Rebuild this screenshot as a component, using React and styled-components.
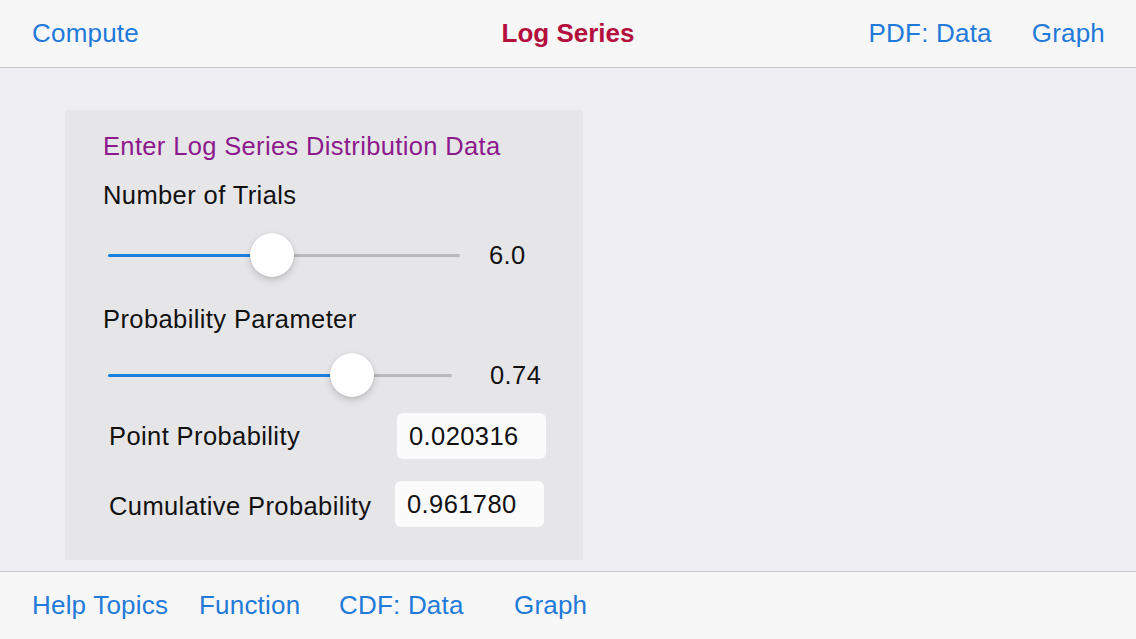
import React from 'react'
import styled, { createGlobalStyle } from 'styled-components'

const GlobalStyle = createGlobalStyle`
  html, body {
    margin: 0;
    padding: 0;
    background: #efeff3;
  }
  body {
    font-family: 'Liberation Sans', Arial, sans-serif;
    -webkit-font-smoothing: antialiased;
  }
`

const Screen = styled.div`
  width: 1136px;
  height: 639px;
  display: flex;
  flex-direction: column;
  background: #efeff3;
  overflow: hidden;
`

const Bar = styled.div`
  height: 68px;
  flex: none;
  display: flex;
  align-items: center;
  background: #f7f7f8;
  box-sizing: border-box;
  padding: 0 31px 0 32px;
  border-bottom: ${p => (p.top ? '1px solid #c9c9cc' : 'none')};
  border-top: ${p => (p.top ? 'none' : '1px solid #c9c9cc')};
  position: relative;
`

const NavButton = styled.span`
  font-size: 26px;
  color: #1f7ad8;
  letter-spacing: 0.2px;
  width: ${p => (p.w ? `${p.w}px` : 'auto')};
  margin-left: ${p => (p.ml ? `${p.ml}px` : '0')};
  white-space: nowrap;
`

const Title = styled.span`
  position: absolute;
  left: 0;
  right: 0;
  text-align: center;
  font-size: 26px;
  font-weight: bold;
  color: #b3103e;
  pointer-events: none;
`

const Spacer = styled.div`
  flex: 1;
`

const Body = styled.div`
  flex: 1;
  padding: 42px 0 0 65px;
  box-sizing: border-box;
`

const Panel = styled.div`
  width: 518px;
  height: 450px;
  background: #e6e6e8;
  box-sizing: border-box;
  padding: 14px 0 0 38px;
  display: flex;
  flex-direction: column;
`

const Heading = styled.div`
  height: 44px;
  line-height: 44px;
  font-size: 25.5px;
  letter-spacing: 0.35px;
  color: #8c1a8c;
  white-space: nowrap;
`

const Label = styled.div`
  height: 44px;
  line-height: 44px;
  margin-top: ${p => p.mt}px;
  font-size: 25.5px;
  letter-spacing: 0.4px;
  color: #111;
  white-space: nowrap;
`

const SliderRow = styled.div`
  height: 44px;
  margin-top: ${p => p.mt}px;
  display: flex;
  align-items: center;
  padding-left: 5px;
`

const Track = styled.div`
  position: relative;
  width: ${p => p.w}px;
  height: 3px;
  border-radius: 2px;
  background: #b9b9bc;
`

const Fill = styled.div`
  height: 100%;
  border-radius: 2px;
  background: #1b7fe0;
`

const Thumb = styled.div`
  position: absolute;
  top: 50%;
  width: 44px;
  height: 44px;
  border-radius: 50%;
  background: #fff;
  transform: translate(-50%, -50%);
  box-shadow: 0 3px 6px rgba(0, 0, 0, 0.18), 0 0 1px rgba(0, 0, 0, 0.2);
`

const SliderValue = styled.span`
  font-size: 25.5px;
  letter-spacing: 0.4px;
  color: #111;
  margin-left: ${p => p.ml}px;
`

const FieldRow = styled.div`
  height: 46px;
  margin-top: ${p => p.mt}px;
  display: flex;
  align-items: center;
  padding-left: 6px;
`

const FieldLabel = styled.span`
  font-size: 25.5px;
  letter-spacing: 0.4px;
  color: #111;
  width: ${p => p.w}px;
  padding-top: ${p => p.pt || 0}px;
  white-space: nowrap;
`

const ValueBox = styled.div`
  width: 149px;
  height: 46px;
  box-sizing: border-box;
  padding-left: 12px;
  line-height: 46px;
  background: #fbfbfc;
  border-radius: 6px;
  font-size: 25.5px;
  letter-spacing: 0.4px;
  color: #111;
`

function Slider({ width, value }) {
  const pct = `${value * 100}%`
  return (
    <Track w={width}>
      <Fill style={{ width: pct }} />
      <Thumb style={{ left: pct }} />
    </Track>
  )
}

export default function App() {
  return (
    <Screen>
      <GlobalStyle />
      <Bar top>
        <NavButton>Compute</NavButton>
        <Title>Log Series</Title>
        <Spacer />
        <NavButton>PDF: Data</NavButton>
        <NavButton ml={40}>Graph</NavButton>
      </Bar>
      <Body>
        <Panel>
          <Heading>Enter Log Series Distribution Data</Heading>
          <Label mt={5}>Number of Trials</Label>
          <SliderRow mt={16}>
            <Slider width={352} value={0.466} />
            <SliderValue ml={29}>6.0</SliderValue>
          </SliderRow>
          <Label mt={20}>Probability Parameter</Label>
          <SliderRow mt={12}>
            <Slider width={344} value={0.709} />
            <SliderValue ml={38}>0.74</SliderValue>
          </SliderRow>
          <FieldRow mt={16}>
            <FieldLabel w={288}>Point Probability</FieldLabel>
            <ValueBox>0.020316</ValueBox>
          </FieldRow>
          <FieldRow mt={22}>
            <FieldLabel w={286} pt={4}>Cumulative Probability</FieldLabel>
            <ValueBox>0.961780</ValueBox>
          </FieldRow>
        </Panel>
      </Body>
      <Bar>
        <NavButton w={167}>Help Topics</NavButton>
        <NavButton w={140}>Function</NavButton>
        <NavButton w={175}>CDF: Data</NavButton>
        <NavButton>Graph</NavButton>
      </Bar>
    </Screen>
  )
}
